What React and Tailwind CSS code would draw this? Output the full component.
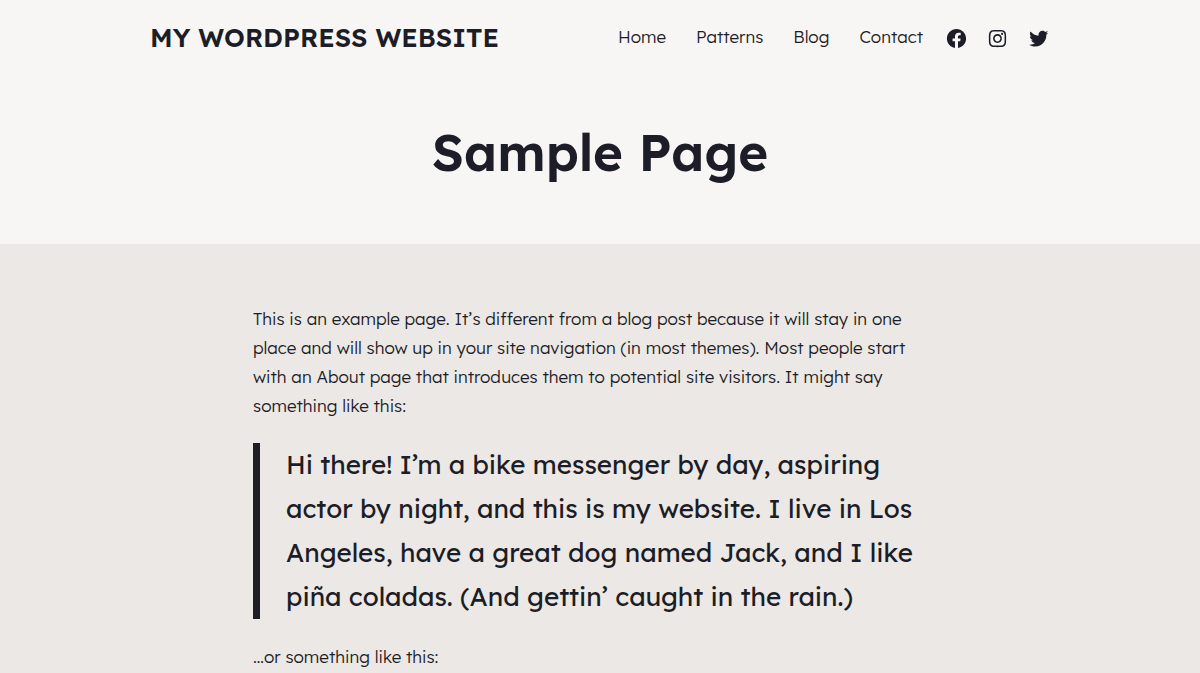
import React from "react";

const navItems = ["Home", "Patterns", "Blog", "Contact"];

const socials = [
  {
    name: "Facebook",
    path: "M12 2C6.5 2 2 6.5 2 12c0 5 3.7 9.1 8.4 9.9v-7H7.9V12h2.5V9.8c0-2.5 1.5-3.9 3.8-3.9 1.1 0 2.2.2 2.2.2v2.5h-1.3c-1.2 0-1.6.8-1.6 1.6V12h2.8l-.4 2.9h-2.3v7C18.3 21.1 22 17 22 12c0-5.5-4.5-10-10-10z",
  },
  {
    name: "Instagram",
    path: "M12,4.622c2.403,0,2.688,0.009,3.637,0.052c0.877,0.04,1.354,0.187,1.671,0.31c0.42,0.163,0.72,0.358,1.035,0.673 c0.315,0.315,0.51,0.615,0.673,1.035c0.123,0.317,0.27,0.794,0.31,1.671c0.043,0.949,0.052,1.234,0.052,3.637 s-0.009,2.688-0.052,3.637c-0.04,0.877-0.187,1.354-0.31,1.671c-0.163,0.42-0.358,0.72-0.673,1.035 c-0.315,0.315-0.615,0.51-1.035,0.673c-0.317,0.123-0.794,0.27-1.671,0.31c-0.949,0.043-1.233,0.052-3.637,0.052 s-2.688-0.009-3.637-0.052c-0.877-0.04-1.354-0.187-1.671-0.31c-0.42-0.163-0.72-0.358-1.035-0.673 c-0.315-0.315-0.51-0.615-0.673-1.035c-0.123-0.317-0.27-0.794-0.31-1.671C4.631,14.688,4.622,14.403,4.622,12 s0.009-2.688,0.052-3.637c0.04-0.877,0.187-1.354,0.31-1.671c0.163-0.42,0.358-0.72,0.673-1.035 c0.315-0.315,0.615-0.51,1.035-0.673c0.317-0.123,0.794-0.27,1.671-0.31C9.312,4.631,9.597,4.622,12,4.622 M12,3 C9.556,3,9.249,3.01,8.289,3.054C7.331,3.098,6.677,3.25,6.105,3.472C5.513,3.702,5.011,4.01,4.511,4.511 c-0.5,0.5-0.808,1.002-1.038,1.594C3.25,6.677,3.098,7.331,3.054,8.289C3.01,9.249,3,9.556,3,12c0,2.444,0.01,2.751,0.054,3.711 c0.044,0.958,0.196,1.612,0.418,2.185c0.23,0.592,0.538,1.094,1.038,1.594c0.5,0.5,1.002,0.808,1.594,1.038 c0.572,0.222,1.227,0.375,2.185,0.418C9.249,20.99,9.556,21,12,21s2.751-0.01,3.711-0.054c0.958-0.044,1.612-0.196,2.185-0.418 c0.592-0.23,1.094-0.538,1.594-1.038c0.5-0.5,0.808-1.002,1.038-1.594c0.222-0.572,0.375-1.227,0.418-2.185 C20.99,14.751,21,14.444,21,12s-0.01-2.751-0.054-3.711c-0.044-0.958-0.196-1.612-0.418-2.185c-0.23-0.592-0.538-1.094-1.038-1.594 c-0.5-0.5-1.002-0.808-1.594-1.038c-0.572-0.222-1.227-0.375-2.185-0.418C14.751,3.01,14.444,3,12,3L12,3z M12,7.378 c-2.552,0-4.622,2.069-4.622,4.622S9.448,16.622,12,16.622s4.622-2.069,4.622-4.622S14.552,7.378,12,7.378z M12,15 c-1.657,0-3-1.343-3-3s1.343-3,3-3s3,1.343,3,3S13.657,15,12,15z M16.804,6.116c-0.596,0-1.08,0.484-1.08,1.08 s0.484,1.08,1.08,1.08c0.596,0,1.08-0.484,1.08-1.08S17.401,6.116,16.804,6.116z",
  },
  {
    name: "Twitter",
    path: "M22.23,5.924c-0.736,0.326-1.527,0.547-2.357,0.646c0.847-0.508,1.498-1.312,1.804-2.27 c-0.793,0.47-1.671,0.812-2.606,0.996C18.324,4.498,17.257,4,16.077,4c-2.266,0-4.103,1.837-4.103,4.103 c0,0.322,0.036,0.635,0.106,0.935C8.67,8.867,5.647,7.234,3.623,4.751C3.27,5.357,3.067,6.062,3.067,6.814 c0,1.424,0.724,2.679,1.825,3.415c-0.673-0.021-1.305-0.206-1.859-0.513c0,0.017,0,0.034,0,0.052c0,1.988,1.414,3.647,3.292,4.023 c-0.344,0.094-0.707,0.144-1.081,0.144c-0.264,0-0.521-0.026-0.772-0.074c0.522,1.63,2.038,2.816,3.833,2.85 c-1.404,1.1-3.174,1.756-5.096,1.756c-0.331,0-0.658-0.019-0.979-0.057c1.816,1.164,3.973,1.843,6.29,1.843 c7.547,0,11.675-6.252,11.675-11.675c0-0.178-0.004-0.355-0.012-0.531C20.985,7.47,21.68,6.747,22.23,5.924z",
  },
];

function Header() {
  return (
    <div className="max-w-[948px] mx-auto px-6 flex flex-wrap items-center justify-between gap-x-6">
      <a href="#" className="text-[26px] leading-9 font-semibold uppercase">My WordPress Website</a>
      <div className="flex flex-wrap items-start gap-[22px]">
        <nav className="flex flex-wrap gap-[30px]">
          {navItems.map((item) => (
            <a key={item} href="#" className="text-[17px] leading-5 hover:underline">{item}</a>
          ))}
        </nav>
        <ul className="flex gap-[18px]">
          {socials.map((s) => (
            <li key={s.name}>
              <a href="#" aria-label={s.name}>
                <svg viewBox="0 0 24 24" fill="currentColor" className="size-[23px]" aria-hidden="true">
                  <path d={s.path} />
                </svg>
              </a>
            </li>
          ))}
        </ul>
      </div>
    </div>
  );
}

export default function App() {
  return (
    <div className="min-h-screen flex flex-col bg-[#f7f6f4] text-[#1c1d26] font-light font-['Lexend','Inter',sans-serif]">
      <header className="pt-5 pb-[58px]">
        <Header />
        <h1 className="mt-[62px] px-6 text-center text-[51px] leading-[68px] font-semibold">Sample Page</h1>
      </header>

      <main className="flex-1 bg-[#ebe8e5] pt-[60px]">
        <div className="max-w-[742px] mx-auto px-6 flex flex-col gap-[23px] text-[17px] leading-[29px]">
          <p className="max-w-[680px]">
            This is an example page. It’s different from a blog post because it will stay in one place and will show up in your site navigation (in most themes). Most people start with an About page that introduces them to potential site visitors. It might say something like this:
          </p>
          <blockquote className="border-l-[7px] border-[#1c1d26] pl-[26px] text-[26px] leading-[44px] font-normal">
            <p>
              Hi there! I’m a bike messenger by day, aspiring actor by night, and this is my website. I live in Los Angeles, have a great dog named Jack, and I like piña coladas. (And gettin’ caught in the rain.)
            </p>
          </blockquote>
          <p>…or something like this:</p>
        </div>
      </main>
    </div>
  );
}
